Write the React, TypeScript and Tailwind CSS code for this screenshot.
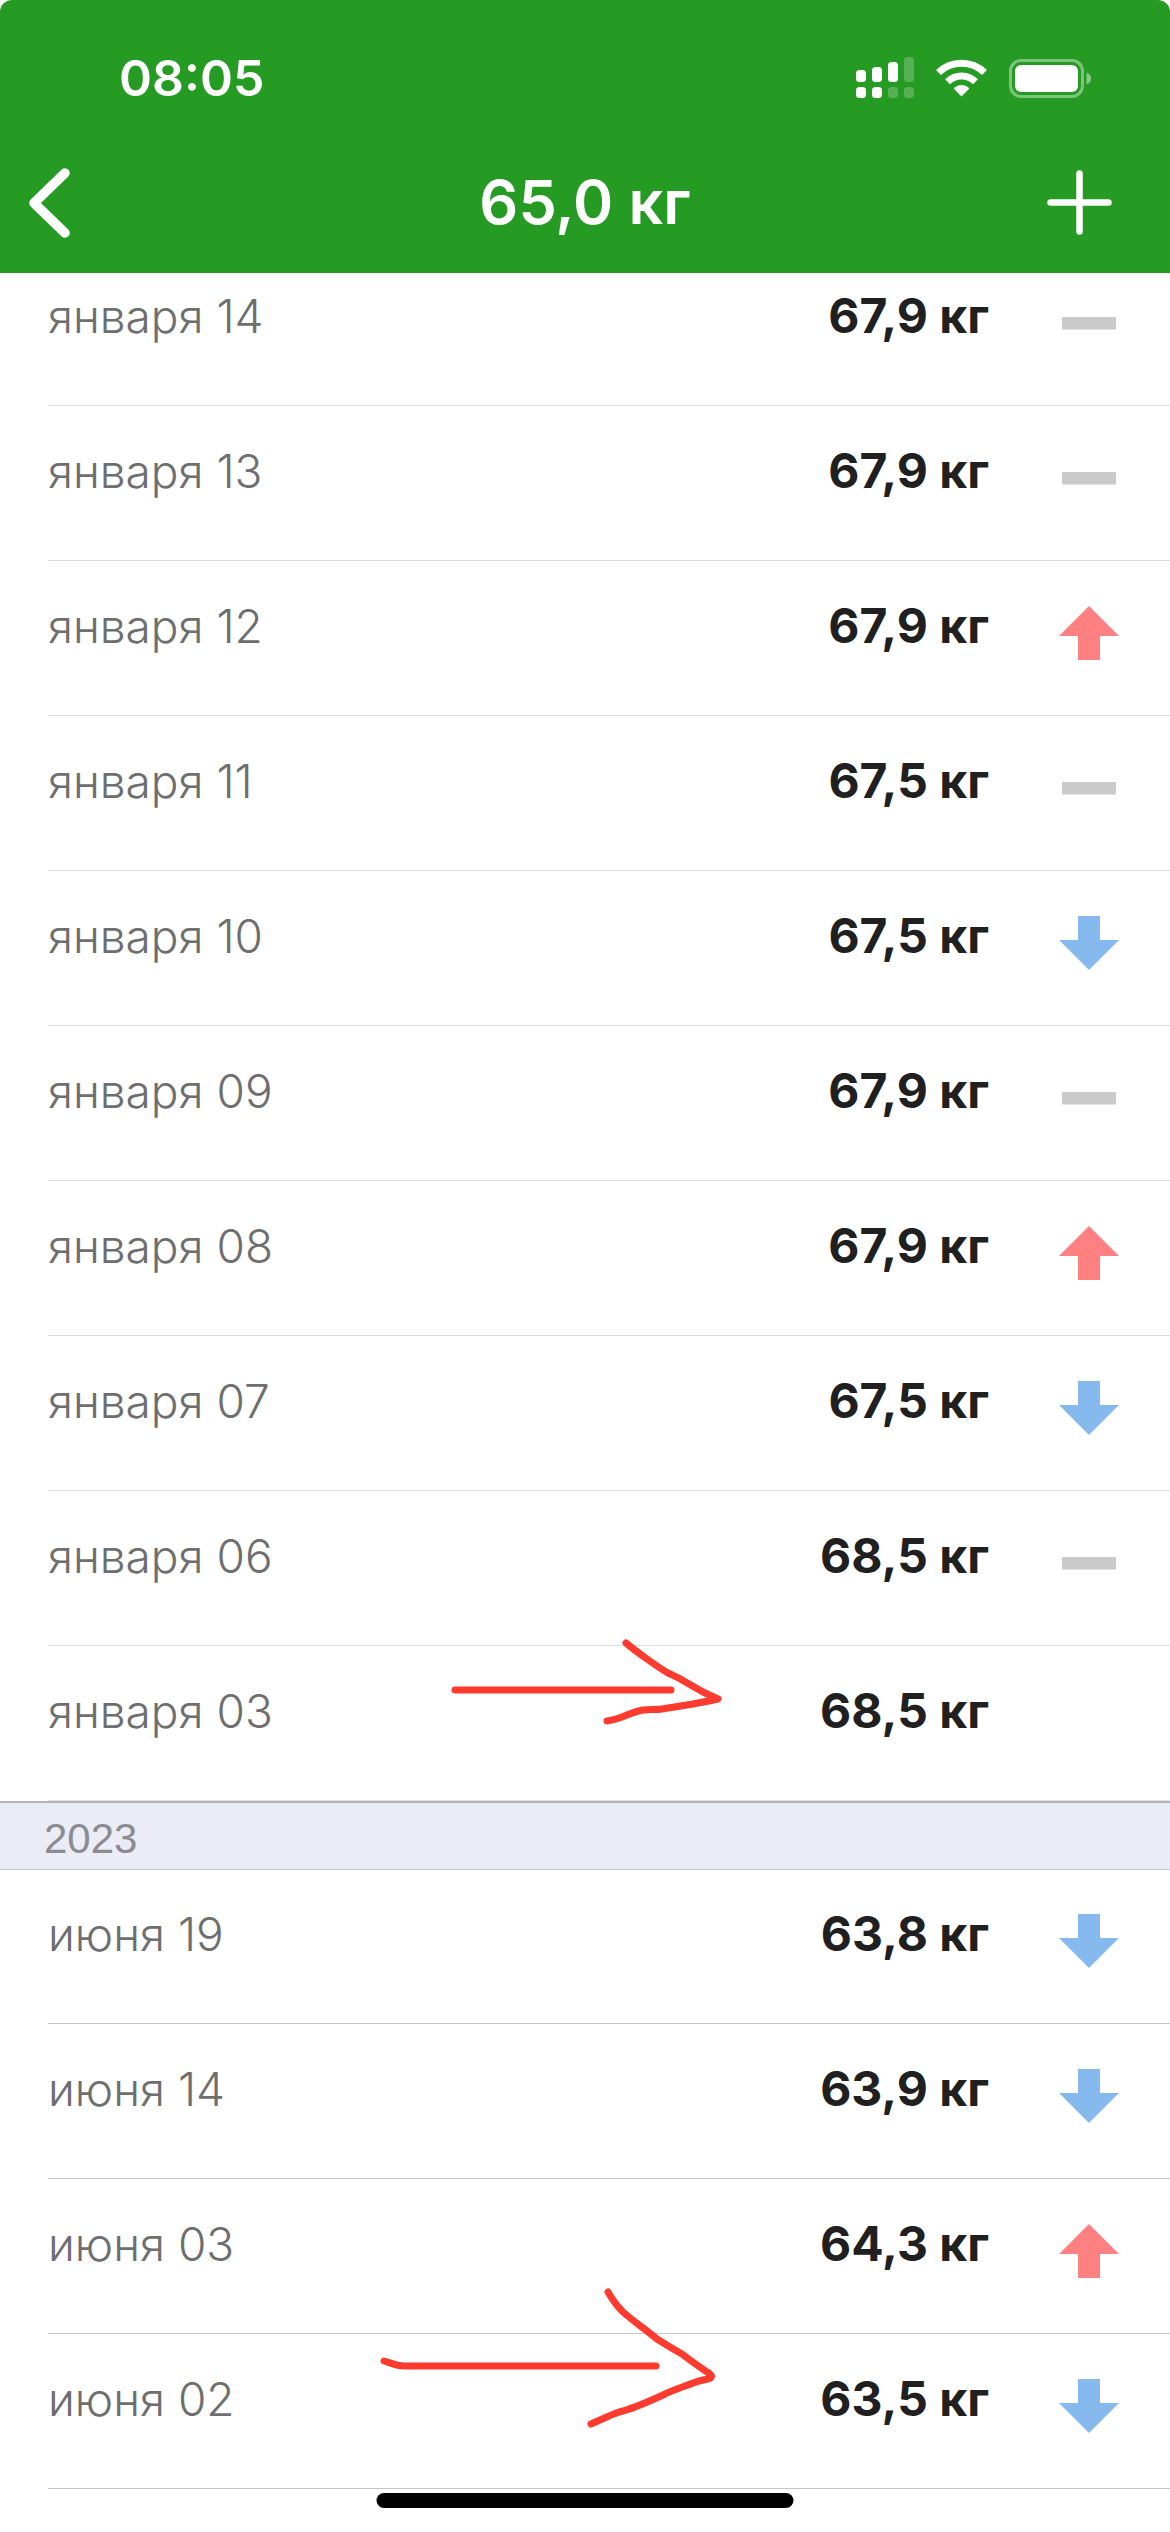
import React from "react";

type Trend = "up" | "down" | "same" | "none";

interface Entry {
  date: string;
  weight: string;
  trend: Trend;
  mark?: "first" | "second";
}

const currentYear: Entry[] = [
  { date: "января 14", weight: "67,9 кг", trend: "same" },
  { date: "января 13", weight: "67,9 кг", trend: "same" },
  { date: "января 12", weight: "67,9 кг", trend: "up" },
  { date: "января 11", weight: "67,5 кг", trend: "same" },
  { date: "января 10", weight: "67,5 кг", trend: "down" },
  { date: "января 09", weight: "67,9 кг", trend: "same" },
  { date: "января 08", weight: "67,9 кг", trend: "up" },
  { date: "января 07", weight: "67,5 кг", trend: "down" },
  { date: "января 06", weight: "68,5 кг", trend: "same" },
  { date: "января 03", weight: "68,5 кг", trend: "none", mark: "first" },
];

const lastYear: Entry[] = [
  { date: "июня 19", weight: "63,8 кг", trend: "down" },
  { date: "июня 14", weight: "63,9 кг", trend: "down" },
  { date: "июня 03", weight: "64,3 кг", trend: "up" },
  { date: "июня 02", weight: "63,5 кг", trend: "down", mark: "second" },
];

const TrendIcon: React.FC<{ trend: Trend }> = ({ trend }) => (
  <svg className="w-[60px] h-[54px] shrink-0" viewBox="0 0 60 54" aria-hidden="true">
    {trend === "up" && (
      <path d="M30 0 60 30H41V54H19V30H0Z" fill="#ff8080" />
    )}
    {trend === "down" && (
      <path d="M30 54 60 24H41V0H19V24H0Z" fill="#86b9ed" />
    )}
    {trend === "same" && (
      <path d="M3 21H57V33.5H3Z" fill="#cacaca" />
    )}
  </svg>
);

// Hand drawn red arrows that point at a weight
const Mark: React.FC<{ mark: "first" | "second" }> = ({ mark }) =>
  mark === "first" ? (
    <svg
      className="absolute right-[440px] -top-3 w-[290px] h-[96px]"
      viewBox="440 1634 290 96"
      fill="none"
      stroke="#ff3b30"
      strokeWidth="7"
      strokeLinecap="round"
      strokeLinejoin="round"
      aria-hidden="true"
    >
      <path d="M455 1690H671" />
      <path d="M626 1643C633 1649 640 1654 647 1659C654 1664 661 1669 668 1673C672 1675 677 1677 682 1680L703 1692L718 1699C710 1701 702 1702 693 1704L662 1709C656 1710 649 1709 643 1710C637 1711 632 1713 627 1715C620 1718 614 1720 607 1721" />
    </svg>
  ) : (
    <svg
      className="absolute right-[440px] -top-[54px] w-[360px] h-[156px]"
      viewBox="370 2280 360 156"
      fill="none"
      stroke="#ff3b30"
      strokeWidth="7"
      strokeLinecap="round"
      strokeLinejoin="round"
      aria-hidden="true"
    >
      <path d="M384 2361C391 2363 397 2366 404 2366H656" />
      <path d="M608 2292C612 2299 617 2306 623 2312C633 2321 645 2329 657 2339C665 2344 673 2349 682 2354C691 2361 701 2368 710 2374C713 2377 711 2378 708 2379C702 2380 698 2381 693 2383C683 2387 673 2390 663 2395C650 2401 637 2407 623 2411C618 2412 614 2414 609 2416L591 2424" />
    </svg>
  );

interface EntryListProps {
  entries: Entry[];
  lineClass: string;
}

const EntryList: React.FC<EntryListProps> = ({ entries, lineClass }) => (
  <ul className="pl-12">
    {entries.map((entry) => (
      <li
        key={entry.date}
        className={`relative flex items-start border-b pt-[38px] pb-[55px] pr-[51px] leading-[54px] ${lineClass}`}
      >
        <span className="flex-1 text-[46px] font-light text-[#6e6e6e]">
          {entry.date}
        </span>
        <span className="mr-[70px] text-[48px] font-bold text-[#202020]">
          {entry.weight}
        </span>
        <span className="pt-[7px]">
          <TrendIcon trend={entry.trend} />
        </span>
        {entry.mark && <Mark mark={entry.mark} />}
      </li>
    ))}
  </ul>
);

const StatusBar: React.FC = () => (
  <div className="flex h-[156px] items-center justify-between pl-[119px] pr-[79px]">
    <span className="text-[50px] leading-[60px] font-semibold">08:05</span>
    <div className="flex items-center gap-[22px]">
      {/* Dual SIM signal */}
      <svg className="w-[58px] h-[42px]" viewBox="0 0 58 42" fill="#fff" aria-hidden="true">
        <rect x="0" y="13" width="10" height="12" rx="3.5" />
        <rect x="16" y="10" width="10" height="15" rx="3.5" />
        <rect x="32" y="5" width="10" height="20" rx="3.5" />
        <rect x="48" y="0" width="10" height="25" rx="3.5" opacity="0.22" />
        <rect x="0" y="30" width="10" height="11" rx="3.5" />
        <rect x="16" y="30" width="10" height="11" rx="3.5" />
        <rect x="32" y="30" width="10" height="11" rx="3.5" opacity="0.22" />
        <rect x="48" y="30" width="10" height="11" rx="3.5" opacity="0.22" />
      </svg>
      {/* Wi-Fi */}
      <svg className="w-[51px] h-[38px]" viewBox="0 0 51 38" aria-hidden="true">
        <g fill="none" stroke="#fff" strokeWidth="7">
          <path d="M2.5 13.5A33 33 0 0 1 48.5 13.5" />
          <path d="M11.5 22.8A20 20 0 0 1 39.5 22.8" />
        </g>
        <path d="M25.5 37.5 18.3 30.2Q17.5 29 18.8 28.2Q25.5 23.8 32.2 28.2Q33.5 29 32.7 30.2Z" fill="#fff" />
      </svg>
      {/* Battery */}
      <svg className="w-[82px] h-[39px]" viewBox="0 0 82 39" aria-hidden="true">
        <rect x="1.5" y="1.5" width="72" height="36" rx="10.5" fill="none" stroke="#fff" strokeWidth="3" opacity="0.4" />
        <rect x="6" y="6" width="63" height="27" rx="6" fill="#fff" />
        <path d="M77.5 13.5Q82 15 82 19.5T77.5 25.5Z" fill="#fff" opacity="0.45" />
      </svg>
    </div>
  </div>
);

const App: React.FC = () => {
  return (
    <div className="min-h-screen bg-white pb-[43px] font-['Inter','Noto_Sans',sans-serif]">
      <header className="relative z-10 rounded-t-xl bg-[#269b24] text-white">
        <StatusBar />
        <div className="grid grid-cols-[1fr_auto_1fr] items-center px-[29px] pb-6">
          <button type="button" aria-label="Назад" className="justify-self-start">
            <svg className="w-[41px] h-[70px]" viewBox="0 0 41 70" fill="none" stroke="#fff" strokeWidth="9.5" strokeLinecap="round" strokeLinejoin="round">
              <path d="M36 5 5 35 36 65" />
            </svg>
          </button>
          <h1 className="text-[61px] leading-[93px] font-semibold">65,0 кг</h1>
          <button type="button" aria-label="Добавить" className="justify-self-end pr-[29px]">
            <svg className="w-[65px] h-[65px]" viewBox="0 0 65 65" fill="none" stroke="#fff" strokeWidth="6.5" strokeLinecap="round">
              <path d="M32.5 3.5V61.5M3.5 32.5H61.5" />
            </svg>
          </button>
        </div>
      </header>

      {/* The list is scrolled a little under the header */}
      <main className="-mt-[22px]">
        <EntryList entries={currentYear} lineClass="border-[#dedee0]" />
        <h2 className="-mb-px border-t-2 border-b border-t-[#b5b3bd] border-b-[#c6c6c8] bg-[#ebecf6] pl-11 pt-[6px] text-[42px] leading-[60px] text-[#8a8b93] font-['Liberation_Sans',sans-serif]">
          2023
        </h2>
        <EntryList entries={lastYear} lineClass="border-[#c6c6c8]" />
      </main>

      {/* Home indicator */}
      <div className="fixed bottom-6 left-1/2 h-[15px] w-[417px] -translate-x-1/2 rounded-full bg-black" />
    </div>
  );
};

export default App;
